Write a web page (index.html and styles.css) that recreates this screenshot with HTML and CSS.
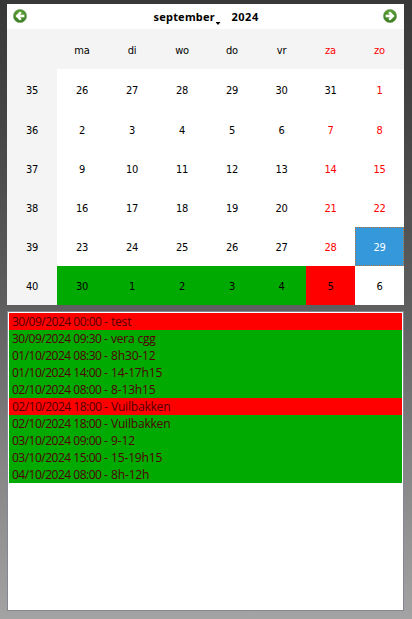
FILE: index.html
```
<!DOCTYPE html>
<html lang="nl">
<head>
<meta charset="utf-8">
<title>Agenda</title>
<link rel="stylesheet" href="styles.css">
</head>
<body>
<svg class="defs" width="0" height="0" aria-hidden="true">
  <defs>
    <radialGradient id="ball" cx="50%" cy="35%" r="65%">
      <stop offset="0" stop-color="#6cae3e"/>
      <stop offset=".65" stop-color="#488c2c"/>
      <stop offset="1" stop-color="#35731f"/>
    </radialGradient>
  </defs>
</svg>
<main class="app">
  <section class="calendar">
    <header class="nav">
      <svg class="arrow" viewBox="0 0 14 14"><circle cx="7" cy="7" r="6.6" fill="url(#ball)" stroke="#7ba668" stroke-width=".7"/><path d="M2.4 7L7 2.6L8.6 4L7 5.8H11.4V8.2H7L8.6 10L7 11.4Z" fill="#fff"/></svg>
      <div class="title"><span class="month">september</span><i class="drop"></i><span class="year">2024</span></div>
      <svg class="arrow" viewBox="0 0 14 14"><circle cx="7" cy="7" r="6.6" fill="url(#ball)" stroke="#7ba668" stroke-width=".7"/><path d="M11.6 7L7 2.6L5.4 4L7 5.8H2.6V8.2H7L5.4 10L7 11.4Z" fill="#fff"/></svg>
    </header>
    <div class="grid">
      <b class="head"></b><b class="head">ma</b><b class="head">di</b><b class="head">wo</b><b class="head">do</b><b class="head">vr</b><b class="head weekend">za</b><b class="head weekend">zo</b>
      <b class="head">35</b><b>26</b><b>27</b><b>28</b><b>29</b><b>30</b><b>31</b><b class="weekend">1</b>
      <b class="head">36</b><b>2</b><b>3</b><b>4</b><b>5</b><b>6</b><b class="weekend">7</b><b class="weekend">8</b>
      <b class="head">37</b><b>9</b><b>10</b><b>11</b><b>12</b><b>13</b><b class="weekend">14</b><b class="weekend">15</b>
      <b class="head">38</b><b>16</b><b>17</b><b>18</b><b>19</b><b>20</b><b class="weekend">21</b><b class="weekend">22</b>
      <b class="head">39</b><b>23</b><b>24</b><b>25</b><b>26</b><b>27</b><b class="weekend">28</b><b class="selected">29</b>
      <b class="head">40</b><b class="free">30</b><b class="free">1</b><b class="free">2</b><b class="free">3</b><b class="free">4</b><b class="busy">5</b><b>6</b>
    </div>
  </section>
  <ul class="events">
    <li class="busy"><span class="when">30/09/2024 00:00 -</span><span class="what">test</span></li>
    <li class="free"><span class="when">30/09/2024 09:30 -</span><span class="what">vera cgg</span></li>
    <li class="free"><span class="when">01/10/2024 08:30 -</span><span class="what">8h30-12</span></li>
    <li class="free"><span class="when">01/10/2024 14:00 -</span><span class="what">14-17h15</span></li>
    <li class="free"><span class="when">02/10/2024 08:00 -</span><span class="what">8-13h15</span></li>
    <li class="busy"><span class="when">02/10/2024 18:00 -</span><span class="what">Vuilbakken</span></li>
    <li class="free"><span class="when">02/10/2024 18:00 -</span><span class="what">Vuilbakken</span></li>
    <li class="free"><span class="when">03/10/2024 09:00 -</span><span class="what">9-12</span></li>
    <li class="free"><span class="when">03/10/2024 15:00 -</span><span class="what">15-19h15</span></li>
    <li class="free"><span class="when">04/10/2024 08:00 -</span><span class="what">8h-12h</span></li>
  </ul>
</main>
</body>
</html>
```
FILE: styles.css
```
* { box-sizing: border-box; }
body {
  margin: 0;
  height: 619px;
  overflow: hidden;
  background: linear-gradient(#383838 0%, #434343 18%, #5f5f5f 50%, #858585 75%, #a3a3a3 100%);
}
.defs { position: absolute; }
.app { padding: 4px 8px 0 7px; }
.calendar {
  height: 301px;
  background: #fff;
  font: 11px "DejaVu Sans Condensed", "DejaVu Sans", sans-serif;
  font-stretch: condensed;
  color: #000;
}
.nav {
  height: 25px;
  display: flex;
  justify-content: space-between;
  padding: 5px 7px 0 6px;
}
.arrow { width: 14px; height: 14px; }
.title {
  display: flex;
  margin-left: 2px;
  font-family: "Noto Sans", sans-serif;
  font-stretch: normal;
  font-weight: 700;
  line-height: 16px;
}
.month { width: 62px; letter-spacing: .2px; }
.year { width: 27px; letter-spacing: .5px; }
.drop {
  width: 5px;
  height: 3px;
  margin: 13px 11px 0 0;
  background: #000;
  clip-path: polygon(0 0, 100% 0, 50% 100%);
}
.grid {
  display: grid;
  grid-template-columns: repeat(5, 50px) repeat(3, 49px);
  grid-template-rows: 40px 41px repeat(5, 39px);
}
.grid b {
  display: flex;
  align-items: center;
  justify-content: center;
  padding-top: 2px;
  font-weight: 400;
  letter-spacing: -.2px;
}
.grid .head { background: #f4f4f4; }
.grid .weekend { color: #f00; }
.grid .selected { background: #3498db; color: #fff; border: 1px dotted #b9743c; }
.free { background: #00aa00; }
.busy { background: #f00; }
.events {
  list-style: none;
  margin: 6px 0 0;
  padding: 1px;
  height: 300px;
  background: #fff;
  border: 1px solid #828790;
  font: 12px "Open Sans", "Noto Sans", sans-serif;
  color: #500000;
}
.events li {
  display: flex;
  height: 17px;
  line-height: 17px;
  padding-left: 3px;
}
.when { width: 99px; white-space: nowrap; letter-spacing: -.5px; }
.what { letter-spacing: -.15px; }
.busy .what, .busy + .free .what { letter-spacing: -.2px; }
```
